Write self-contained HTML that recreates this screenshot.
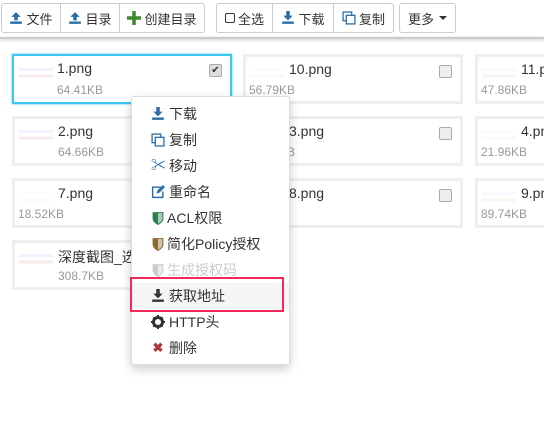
<!DOCTYPE html>
<html><head><meta charset="utf-8"><style>
*{box-sizing:border-box;margin:0;padding:0}
body{width:544px;height:436px;background:#fff;font-family:"Liberation Sans","Noto Sans CJK SC",sans-serif;font-size:13px;color:#333;position:relative;overflow:hidden}
.btn{position:absolute;top:3px;height:30px;border:1px solid #ccc;background:#fff;display:flex;align-items:center;justify-content:center;font-size:13px;gap:3px}
.btn svg{width:14px;height:14px}
.bar{position:absolute;left:0;top:37px;width:544px;height:2px;background:#ccc;box-shadow:0 1px 3px rgba(0,0,0,.25)}
.card{position:absolute;width:220px;height:50px;border:3px solid #eee;background:#fff}
.card.sel{border:2px solid #3cc6f0;box-shadow:0 0 2px #3cc6f0}
.thumb{position:absolute;left:4px;top:6px;width:34px;height:26px;background:linear-gradient(#fff 0 20%,#eef 20% 30%,#fff 30% 45%,#f3e6e6 45% 55%,#fff 55%);opacity:.8}
.name{position:absolute;left:43px;top:4px;font-size:14px;color:#333;white-space:nowrap}
.size{position:absolute;left:43px;top:26px;font-size:12px;color:#999}
.cb{position:absolute;right:8px;top:8px;width:13px;height:13px;border:1px solid #aaa;border-radius:2px;background:#eee}
.menu{position:absolute;left:131px;top:96px;width:159px;height:269px;background:#fff;border:1px solid #ddd;border-radius:3px;box-shadow:0 4px 10px rgba(0,0,0,.2);padding-top:4px}
.it{height:26px;display:flex;align-items:center;padding-left:19px;font-size:14px;color:#333;gap:4px}
.ic{width:14px;height:14px;display:inline-block;text-align:center;font-size:13px;line-height:14px}
</style></head><body>
<div class="btn" style="left:1px;width:60px;border-radius:3px 0 0 3px"><svg viewBox="0 0 12 12"><path d="M6 1 2 5h2.5v3h3V5H10z M1 9h10v2H1z" fill="#2a6ea8"/></svg>文件</div>
<div class="btn" style="left:60px;width:60px"><svg viewBox="0 0 12 12"><path d="M6 1 2 5h2.5v3h3V5H10z M1 9h10v2H1z" fill="#2a6ea8"/></svg>目录</div>
<div class="btn" style="left:119px;width:86px;border-radius:0 3px 3px 0"><svg viewBox="0 0 12 12"><path d="M4.5 0h3v4.5H12v3H7.5V12h-3V7.5H0v-3h4.5z" fill="#3a8a2c"/></svg>创建目录</div>
<div class="btn" style="left:216px;width:57px;border-radius:3px 0 0 3px"><span style="display:inline-block;width:10px;height:10px;border:1px solid #333;border-radius:2px"></span>全选</div>
<div class="btn" style="left:272px;width:62px"><svg viewBox="0 0 12 12"><path d="M4.5 0h3v4H10L6 8 2 4h2.5z M1 9h10v2H1z" fill="#2a6ea8"/></svg>下载</div>
<div class="btn" style="left:333px;width:61px;border-radius:0 3px 3px 0"><svg viewBox="0 0 13 13"><rect x="1" y="1" width="8" height="8" fill="none" stroke="#2a6ea8" stroke-width="1.2"/><rect x="4" y="4" width="8" height="8" fill="#fff" stroke="#2a6ea8" stroke-width="1.2"/></svg>复制</div>
<div class="btn" style="left:399px;width:57px;border-radius:3px">更多<span style="border-top:4px solid #333;border-left:4px solid transparent;border-right:4px solid transparent;margin-left:2px"></span></div>
<div class="bar"></div>

<div class="card sel" style="left:12px;top:54px"><div class="thumb" style="left:5px;top:7px"></div><div class="name">1.png</div><div class="size" style="top:27px">64.41KB</div><div class="cb" style="background:#ddd;font-size:10px;line-height:11px;text-align:center">✔</div></div>
<div class="card" style="left:243px;top:54px"><div class="thumb" style="opacity:.3"></div><div class="name">10.png</div><div class="size" style="left:3px">56.79KB</div><div class="cb"></div></div>
<div class="card" style="left:475px;top:54px"><div class="thumb" style="opacity:.4"></div><div class="name">11.png</div><div class="size" style="left:3px">47.86KB</div></div>

<div class="card" style="left:12px;top:116px"><div class="thumb"></div><div class="name">2.png</div><div class="size">64.66KB</div></div>
<div class="card" style="left:243px;top:116px"><div class="thumb" style="opacity:.3"></div><div class="name">3.png</div><div class="size" style="left:3px">74.75KB</div><div class="cb"></div></div>
<div class="card" style="left:475px;top:116px"><div class="thumb" style="opacity:.3"></div><div class="name">4.png</div><div class="size" style="left:3px">21.96KB</div></div>

<div class="card" style="left:12px;top:178px"><div class="thumb" style="opacity:.2"></div><div class="name">7.png</div><div class="size" style="left:3px">18.52KB</div></div>
<div class="card" style="left:243px;top:178px"><div class="thumb" style="opacity:.3"></div><div class="name">8.png</div><div class="size" style="left:3px">18KB</div><div class="cb"></div></div>
<div class="card" style="left:475px;top:178px"><div class="thumb" style="opacity:.4"></div><div class="name">9.png</div><div class="size" style="left:3px">89.74KB</div></div>

<div class="card" style="left:12px;top:240px"><div class="thumb"></div><div class="name">深度截图_选择区域</div><div class="size">308.7KB</div></div>

<div class="menu">
<div class="it"><svg class="ic" viewBox="0 0 12 12"><path d="M4.5 0h3v4H10L6 8 2 4h2.5z M1 9h10v2H1z" fill="#2a6ea8"/></svg>下载</div>
<div class="it"><svg class="ic" viewBox="0 0 13 13"><rect x="1" y="1" width="8" height="8" fill="none" stroke="#2a6ea8" stroke-width="1.2"/><rect x="4" y="4" width="8" height="8" fill="#fff" stroke="#2a6ea8" stroke-width="1.2"/></svg>复制</div>
<div class="it"><span class="ic" style="color:#2a6ea8;font-size:15px">✂</span>移动</div>
<div class="it"><svg class="ic" viewBox="0 0 13 13"><path d="M9 2H1.5v9.5H11V6" fill="none" stroke="#2a6ea8" stroke-width="1.3"/><path d="M5 8l1-3 5-5 2 2-5 5z" fill="#2a6ea8"/></svg>重命名</div>
<div class="it" style="gap:2px"><svg class="ic" viewBox="0 0 12 13"><path d="M1 1h10v6c0 3-3 5-5 6-2-1-5-3-5-6z" fill="#2e7d4e"/><path d="M6 2h4v5c0 2-2 4-4 5z" fill="#fff" opacity=".6"/></svg>ACL权限</div>
<div class="it" style="gap:2px"><svg class="ic" viewBox="0 0 12 13"><path d="M1 1h10v6c0 3-3 5-5 6-2-1-5-3-5-6z" fill="#8a6a2e"/><path d="M6 2h4v5c0 2-2 4-4 5z" fill="#fff" opacity=".6"/></svg>简化Policy授权</div>
<div class="it" style="gap:2px;color:#ccc"><svg class="ic" viewBox="0 0 12 13"><path d="M1 1h10v6c0 3-3 5-5 6-2-1-5-3-5-6z" fill="#ccc"/><path d="M6 2h4v5c0 2-2 4-4 5z" fill="#fff" opacity=".6"/></svg>生成授权码</div>
<div class="it" style="background:#f5f5f5"><svg class="ic" viewBox="0 0 12 12"><path d="M4.5 0h3v4H10L6 8 2 4h2.5z M1 9h10v2H1z" fill="#333"/></svg>获取地址</div>
<div class="it"><svg class="ic" viewBox="0 0 14 14"><circle cx="7" cy="7" r="4.5" fill="none" stroke="#333" stroke-width="3"/><path d="M6 0h2v3H6zM6 11h2v3H6zM0 6h3v2H0zM11 6h3v2h-3zM1.6 3l1.4-1.4 2 2-1.4 1.4zM9 10.4l1.4-1.4 2 2-1.4 1.4zM1.6 11l2-2 1.4 1.4-2 2zM9 3.6l2-2 1.4 1.4-2 2z" fill="#333"/></svg>HTTP头</div>
<div class="it"><span class="ic" style="color:#b03a3a;font-weight:bold">✖</span>删除</div>
</div>
<div style="position:absolute;left:130px;top:277px;width:154px;height:35px;border:2px solid #f5285a"></div>
</body></html>
